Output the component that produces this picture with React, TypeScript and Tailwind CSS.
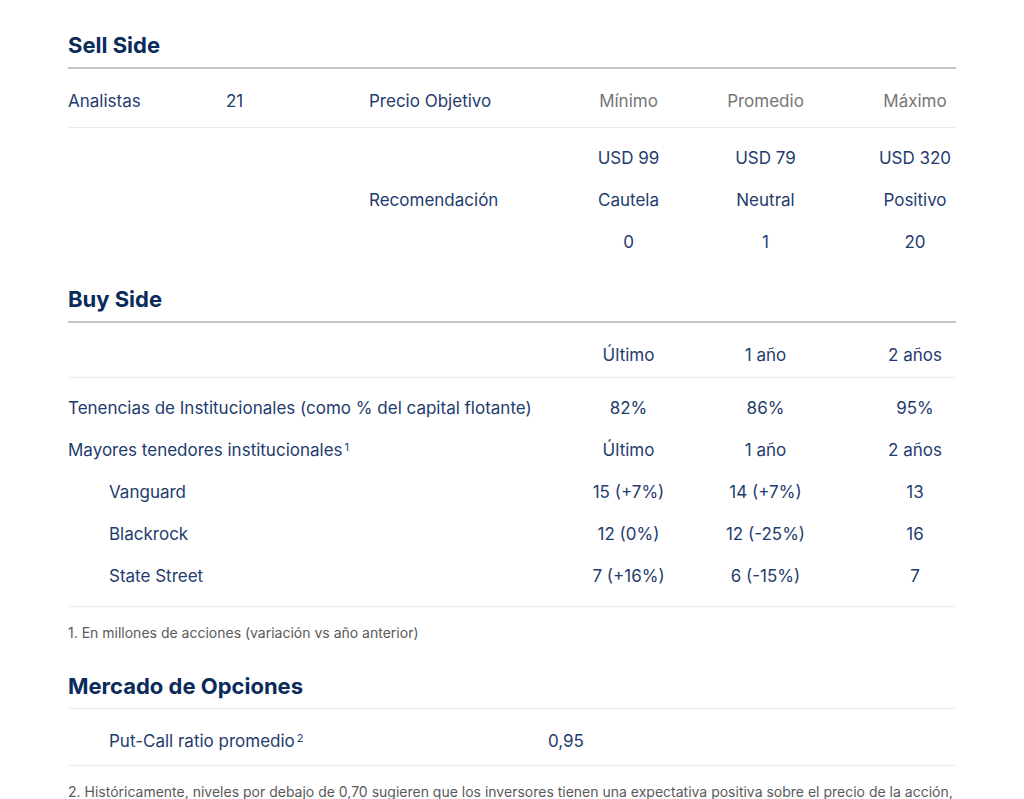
import type React from "react"

const font = { fontFamily: "Inter, Lato, 'Open Sans', sans-serif" }

// celdas de valores con el mismo ancho en todas las tablas
function Cells({ values, muted }: { values: React.ReactNode[]; muted?: boolean }) {
  const color = muted ? "text-[#767676]" : "text-[#1f3c6e]"
  return (
    <>
      <div className={`w-[137px] shrink-0 text-center ${color}`}>{values[0]}</div>
      <div className={`w-[137px] shrink-0 text-center ${color}`}>{values[1]}</div>
      <div className={`w-[122px] shrink-0 pl-10 text-center ${color}`}>{values[2]}</div>
    </>
  )
}

function Row({ children, values, muted }: { children?: React.ReactNode; values: React.ReactNode[]; muted?: boolean }) {
  return (
    <div className="flex h-[42px] items-center pt-1">
      <div className="flex flex-1 items-center">{children}</div>
      <Cells values={values} muted={muted} />
    </div>
  )
}

function Heading({ children }: { children: React.ReactNode }) {
  return <h2 className="text-[22px] leading-[28px] font-bold text-[#0b2b5b]">{children}</h2>
}

export default function App() {
  return (
    <div className="min-h-screen bg-white" style={font}>
      <div className="mx-[68px] pt-[31px] text-[17px] text-[#1f3c6e]">
        {/* Sell Side */}
        <Heading>Sell Side</Heading>
        <div className="mt-2 border-t-2 border-[#c6c6c6] pt-2.5 pb-1.5">
          <Row values={["Mínimo", "Promedio", "Máximo"]} muted>
            <span className="w-[158px]">Analistas</span>
            <span className="w-[143px]">21</span>
            <span>Precio Objetivo</span>
          </Row>
        </div>
        <div className="border-t border-[#ececec] pt-2">
          <Row values={["USD 99", "USD 79", "USD 320"]} />
          <Row values={["Cautela", "Neutral", "Positivo"]}>
            <span className="pl-[301px]">Recomendación</span>
          </Row>
          <Row values={["0", "1", "20"]} />
        </div>

        {/* Buy Side */}
        <div className="mt-[23px]">
          <Heading>Buy Side</Heading>
        </div>
        <div className="mt-2 border-t-2 border-[#c6c6c6] pt-2.5 pb-0.5">
          <Row values={["Último", "1 año", "2 años"]} />
        </div>
        <div className="border-t border-[#ececec] pt-2 pb-2.5">
          <Row values={["82%", "86%", "95%"]}>
            <span>Tenencias de Institucionales (como % del capital flotante)</span>
          </Row>
          <Row values={["Último", "1 año", "2 años"]}>
            <span>
              Mayores tenedores institucionales
              <sup className="ml-0.5 text-[11px]">1</sup>
            </span>
          </Row>
          <Row values={["15 (+7%)", "14 (+7%)", "13"]}>
            <span className="pl-[41px]">Vanguard</span>
          </Row>
          <Row values={["12 (0%)", "12 (-25%)", "16"]}>
            <span className="pl-[41px]">Blackrock</span>
          </Row>
          <Row values={["7 (+16%)", "6 (-15%)", "7"]}>
            <span className="pl-[41px]">State Street</span>
          </Row>
        </div>
        <div className="border-t border-[#ececec] pt-4 text-[14px] leading-5 text-[#5a5a5a]">
          1. En millones de acciones (variación vs año anterior)
        </div>

        {/* Mercado de Opciones */}
        <div className="mt-[29px]">
          <Heading>Mercado de Opciones</Heading>
        </div>
        <div className="mt-2 border-t border-[#ececec] pt-2.5 pb-1">
          <div className="flex h-[42px] items-center pt-1">
            <span className="w-[480px] pl-[41px]">
              Put-Call ratio promedio
              <sup className="ml-0.5 text-[11px]">2</sup>
            </span>
            <span>0,95</span>
          </div>
        </div>
        <div className="border-t border-[#ececec] pt-4 text-[14px] leading-5 text-[#5a5a5a]">
          <p className="whitespace-nowrap">
            2. Históricamente, niveles por debajo de 0,70 sugieren que los inversores tienen una expectativa positiva sobre el precio de la acción,
          </p>
          <p>mientras que niveles por encima de 1,00 sugieren una expectativa negativa.</p>
        </div>
      </div>
    </div>
  )
}
